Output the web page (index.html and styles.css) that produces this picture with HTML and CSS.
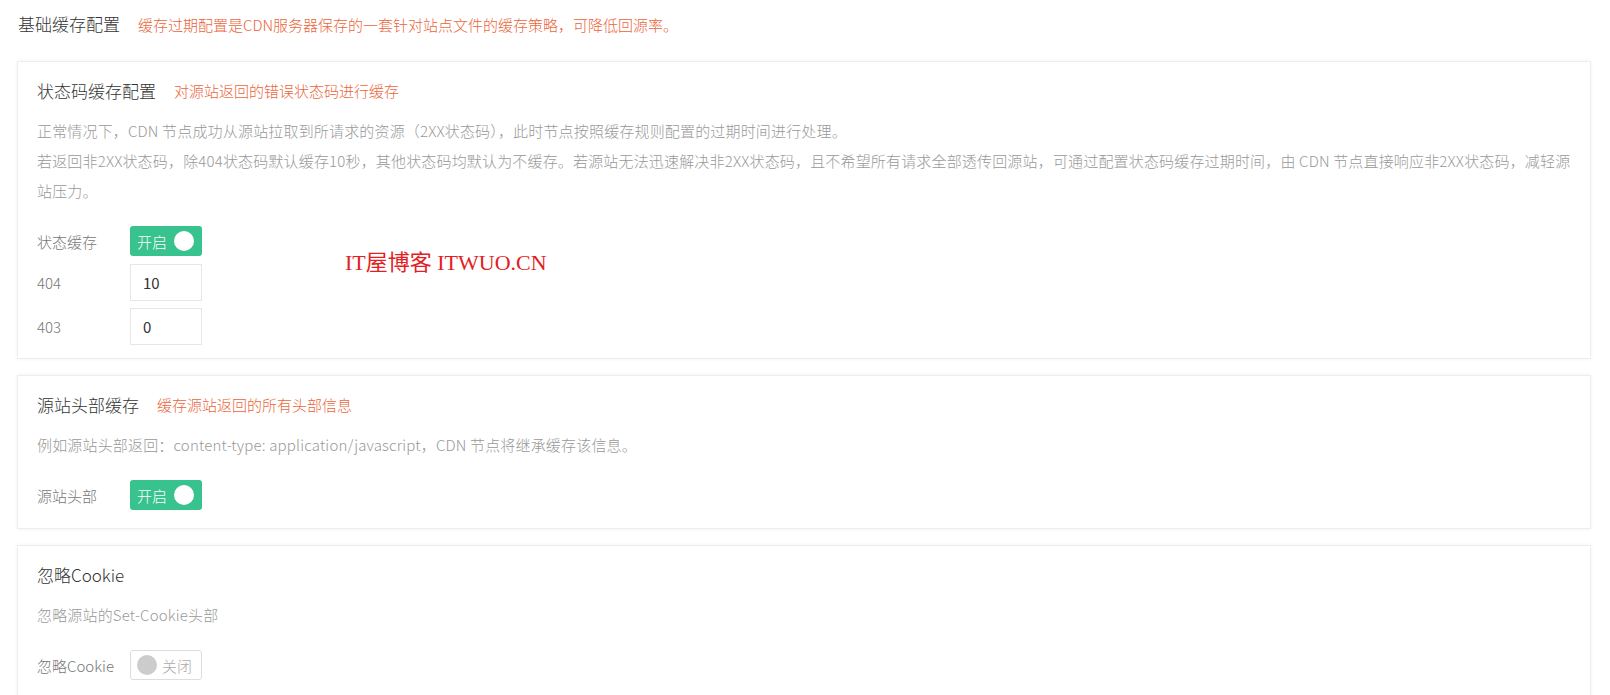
FILE: index.html
```html
<!DOCTYPE html>
<html lang="zh-CN">
<head>
    <meta charset="UTF-8">
    <meta name="viewport" content="width=device-width, initial-scale=1.0">
    <title>基础缓存配置</title>
    <link rel="stylesheet" href="styles.css">
</head>
<body>
    <div class="page-head">
        <h2 class="page-title">基础缓存配置</h2>
        <span class="hint">缓存过期配置是CDN服务器保存的一套针对站点文件的缓存策略，可降低回源率。</span>
    </div>

    <!-- 状态码缓存 -->
    <section class="card card-status">
        <div class="card-head">
            <h3 class="card-title">状态码缓存配置</h3>
            <span class="hint">对源站返回的错误状态码进行缓存</span>
        </div>
        <div class="card-desc">
            <p>正常情况下，CDN 节点成功从源站拉取到所请求的资源（2XX状态码），此时节点按照缓存规则配置的过期时间进行处理。</p>
            <p>若返回非2XX状态码，除404状态码默认缓存10秒，其他状态码均默认为不缓存。若源站无法迅速解决非2XX状态码，且不希望所有请求全部透传回源站，可通过配置状态码缓存过期时间，由 CDN 节点直接响应非2XX状态码，减轻源站压力。</p>
        </div>
        <div class="form-row first">
            <label class="form-label">状态缓存</label>
            <span class="switch on">开启<i class="knob"></i></span>
        </div>
        <div class="form-row">
            <label class="form-label">404</label>
            <input class="field" type="text" value="10">
        </div>
        <div class="form-row">
            <label class="form-label">403</label>
            <input class="field" type="text" value="0">
        </div>
        <div class="watermark">IT屋博客 ITWUO.CN</div>
    </section>

    <!-- 源站头部缓存 -->
    <section class="card">
        <div class="card-head">
            <h3 class="card-title">源站头部缓存</h3>
            <span class="hint">缓存源站返回的所有头部信息</span>
        </div>
        <div class="card-desc">
            <p>例如源站头部返回：content-type: application/javascript，CDN 节点将继承缓存该信息。</p>
        </div>
        <div class="form-row first">
            <label class="form-label">源站头部</label>
            <span class="switch on">开启<i class="knob"></i></span>
        </div>
    </section>

    <!-- 忽略Cookie -->
    <section class="card">
        <div class="card-head">
            <h3 class="card-title">忽略Cookie</h3>
        </div>
        <div class="card-desc">
            <p>忽略源站的Set-Cookie头部</p>
        </div>
        <div class="form-row first">
            <label class="form-label">忽略Cookie</label>
            <span class="switch off"><i class="knob"></i>关闭</span>
        </div>
    </section>
</body>
</html>
```

FILE: styles.css
```css
body {
    font-family: "Noto Sans CJK SC", sans-serif;
    font-weight: 300;
    background-color: #fff;
    margin: 0;
    padding: 12px 19px 0 17px;
    color: #333;
}
.page-head {
    display: flex;
    align-items: center;
    height: 24px;
    padding-left: 1px;
    margin-bottom: 25px;
}
.page-title {
    margin: 0;
    font-size: 17px;
    font-weight: 300;
    line-height: 24px;
}
.hint {
    margin-left: 18px;
    font-size: 15px;
    color: #ec643a;
}
.card {
    position: relative;
    background-color: #fff;
    border: 1px solid #ededed;
    box-shadow: 0 0 4px rgba(0, 0, 0, 0.05);
    padding: 15px 19px 18px;
    margin-bottom: 16px;
}
.card-status {
    padding-bottom: 13px;
}
.card-head {
    display: flex;
    align-items: center;
    height: 26px;
}
.card-title {
    margin: 0;
    font-size: 17px;
    font-weight: 300;
}
.card-desc {
    margin-top: 13px;
    font-size: 15px;
    line-height: 30px;
    letter-spacing: 0.17px;
    color: #999;
}
.card-desc p {
    margin: 0;
}
.form-row {
    display: flex;
    align-items: center;
    margin-top: 8px;
}
.form-row.first {
    margin-top: 20px;
}
.form-row + .form-row + .form-row {
    margin-top: 7px;
}
.form-label {
    width: 93px;
    font-size: 15px;
    color: #777;
}
.switch {
    display: flex;
    align-items: center;
    justify-content: space-between;
    box-sizing: border-box;
    width: 72px;
    height: 30px;
    border-radius: 3px;
    font-size: 15px;
}
.switch.on {
    background-color: #37c28e;
    color: #fff;
    padding: 0 8px 0 7px;
}
.switch.on .knob {
    background-color: #fff;
}
.switch.off {
    background-color: #fff;
    border: 1px solid #ddd;
    color: #aaa;
    padding: 0 9px 0 6px;
}
.switch.off .knob {
    background-color: #ccc;
}
.knob {
    width: 20px;
    height: 20px;
    border-radius: 50%;
}
.field {
    box-sizing: border-box;
    width: 72px;
    height: 37px;
    padding: 0 12px;
    border: 1px solid #e6e6e6;
    border-radius: 0;
    font-family: "Noto Sans CJK SC", sans-serif;
    font-size: 15px;
    color: #333;
    outline: none;
}
.watermark {
    position: absolute;
    left: 327px;
    top: 190px;
    font-family: "Liberation Serif", "Noto Sans CJK SC", serif;
    font-weight: normal;
    font-size: 22px;
    line-height: 22px;
    color: #e3201f;
    white-space: nowrap;
}
```
